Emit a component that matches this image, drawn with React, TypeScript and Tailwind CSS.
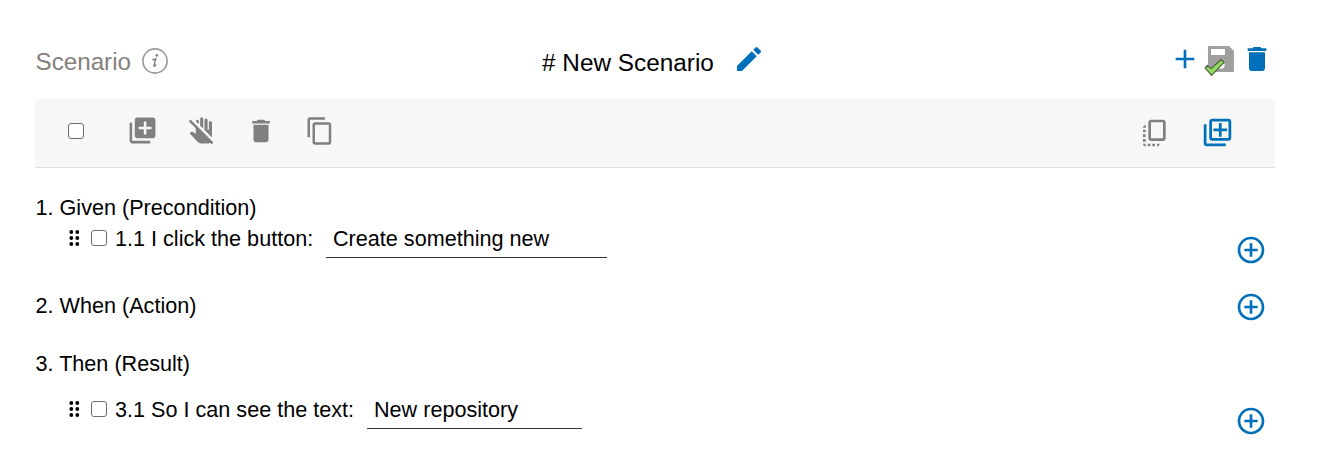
import type { ReactNode } from 'react';
import {
  MdAdd,
  MdAddCircleOutline,
  MdContentCopy,
  MdCopyAll,
  MdDelete,
  MdDoNotTouch,
  MdEdit,
  MdLibraryAdd,
} from 'react-icons/md';

function InfoIcon() {
  return (
    <svg viewBox="0 0 26 26" className="size-[26px]" fill="none">
      <circle cx="13" cy="13" r="12.1" stroke="#999" strokeWidth="1.6" />
      <circle cx="14.8" cy="7.4" r="1.3" fill="#858585" />
      <path d="M10.4 11.7 13.8 11l-1.9 6.4c-.3 1.2.8 1 2.5-.8" stroke="#858585" strokeWidth="1.5" />
    </svg>
  );
}

function SaveIcon() {
  return (
    <svg viewBox="0 0 30 30" className="h-[30px] w-[30px]">
      <path d="M4.5 0H25l5 5v20a1 1 0 0 1-1 1H5a1 1 0 0 1-1-1V.5z" fill="#a29f9f" />
      <path d="M7 3h14v6H7z" fill="#fff" />
      <circle cx="16.8" cy="19" r="3.8" fill="#fff" />
      <path
        d="M1 21.8 3.4 19.4 7 22.6 17.2 13.5 20.2 16.3 7.6 29.3z"
        fill="#8fd85a"
        stroke="#4a5a40"
        strokeWidth="1.1"
        strokeLinejoin="round"
      />
    </svg>
  );
}

function AddLayersIcon() {
  return (
    <svg viewBox="0 0 24 24" className="size-[33px]" fill="currentColor">
      <path d="M4 6H2v14c0 1.1.9 2 2 2h14v-2H4V6zm16-4H8c-1.1 0-2 .9-2 2v12c0 1.1.9 2 2 2h12c1.1 0 2-.9 2-2V4c0-1.1-.9-2-2-2zm0 14H8V4h12v12zm-7-1h2v-4h4V9h-4V5h-2v4H9v2h4v4z" />
    </svg>
  );
}

function DragHandle() {
  return (
    <svg viewBox="0 0 12 16" className="h-4 w-3" fill="#000">
      {[2, 8, 14].map((y) => (
        <g key={y}>
          <circle cx="3.3" cy={y} r="1.9" />
          <circle cx="9.3" cy={y} r="1.9" />
        </g>
      ))}
    </svg>
  );
}

function Checkbox() {
  return (
    <input
      type="checkbox"
      className="block size-4 shrink-0 appearance-none rounded-[3px] border border-[#6b6b6b] bg-white"
    />
  );
}

function Step({ label, value, gap, width }: { label: string; value: string; gap: string; width: string }) {
  return (
    <div className="flex h-[38px] pl-[33px]">
      <div className="flex h-[38px] items-start">
        <span className="mt-[10px]"><DragHandle /></span>
        <span className="mt-[10px] ml-[10.5px]"><Checkbox /></span>
        <span className={`ml-[8.5px] leading-[37px] ${gap}`}>{label}</span>
      </div>
      <div className={`border-b border-[#333] pl-[7.5px] leading-[37px] ${width}`}>{value}</div>
    </div>
  );
}

function Section({ title, className, children, add }: { title: string; className: string; children?: ReactNode; add: string }) {
  return (
    <section className={`flex justify-between ${className}`}>
      <div>
        <h2 className="pl-[0.5px] leading-[26px]">{title}</h2>
        {children}
      </div>
      <button className={`mr-2 size-8 text-[#0070ba] ${add}`}>
        <MdAddCircleOutline size={32} />
      </button>
    </section>
  );
}

export default function App() {
  return (
    <main className="h-[475px] w-[1320px] overflow-hidden bg-white pr-[45px] pl-[35px] font-['Liberation_Sans',Arial,sans-serif] text-[21.62px] whitespace-nowrap text-black">
      <header className="flex h-[99px] items-start pt-[43px]">
        <div className="flex w-[507px] items-start pl-[0.5px] text-[24.2px] text-[#85807b]">
          <span className="mt-[3px] leading-8">Scenario</span>
          <span className="mt-[5px] ml-[11px]"><InfoIcon /></span>
        </div>
        <h1 className="mt-1 text-[24.35px] leading-8">{'# New Scenario'}</h1>
        <MdEdit size={32} className="ml-[19.5px] text-[#0070ba]" />
        <div className="ml-auto flex items-start text-[#0070ba]">
          <MdAdd size={32} />
          <span className="mt-[3px] ml-[3px]"><SaveIcon /></span>
          <MdDelete size={32} className="mr-[2.5px] ml-[6.5px]" />
        </div>
      </header>

      <div className="flex h-[69px] items-start border-b border-[#e0e0e0] bg-[#f7f7f7] text-[#808080]">
        <span className="mt-6 ml-[33px]"><Checkbox /></span>
        <MdLibraryAdd size={31} className="mt-4 ml-[43px]" />
        <MdDoNotTouch size={30} className="mt-[17px] ml-[29px]" />
        <MdDelete size={30} className="mt-[17px] ml-[29px]" />
        <MdContentCopy size={30} className="mt-[17px] ml-[29px]" />
        <MdCopyAll size={32} className="mt-[18px] ml-auto" />
        <span className="mt-[17px] mr-[41px] ml-[30px] text-[#0070ba]"><AddLayersIcon /></span>
      </div>

      <Section title="1. Given (Precondition)" className="mt-[27px] h-[98px]" add="mt-[39px]">
        <div className="-mt-[1px]">
          <Step label="1.1 I click the button:" value="Create something new" gap="w-[210.5px]" width="w-[281px]" />
        </div>
      </Section>
      <Section title="2. When (Action)" className="h-[58px]" add="-mt-[2px]" />
      <Section title="3. Then (Result)" className="h-[90px]" add="mt-[54px]">
        <div className="mt-[14px]">
          <Step label="3.1 So I can see the text:" value="New repository" gap="w-[251.5px]" width="w-[215px]" />
        </div>
      </Section>
    </main>
  );
}
